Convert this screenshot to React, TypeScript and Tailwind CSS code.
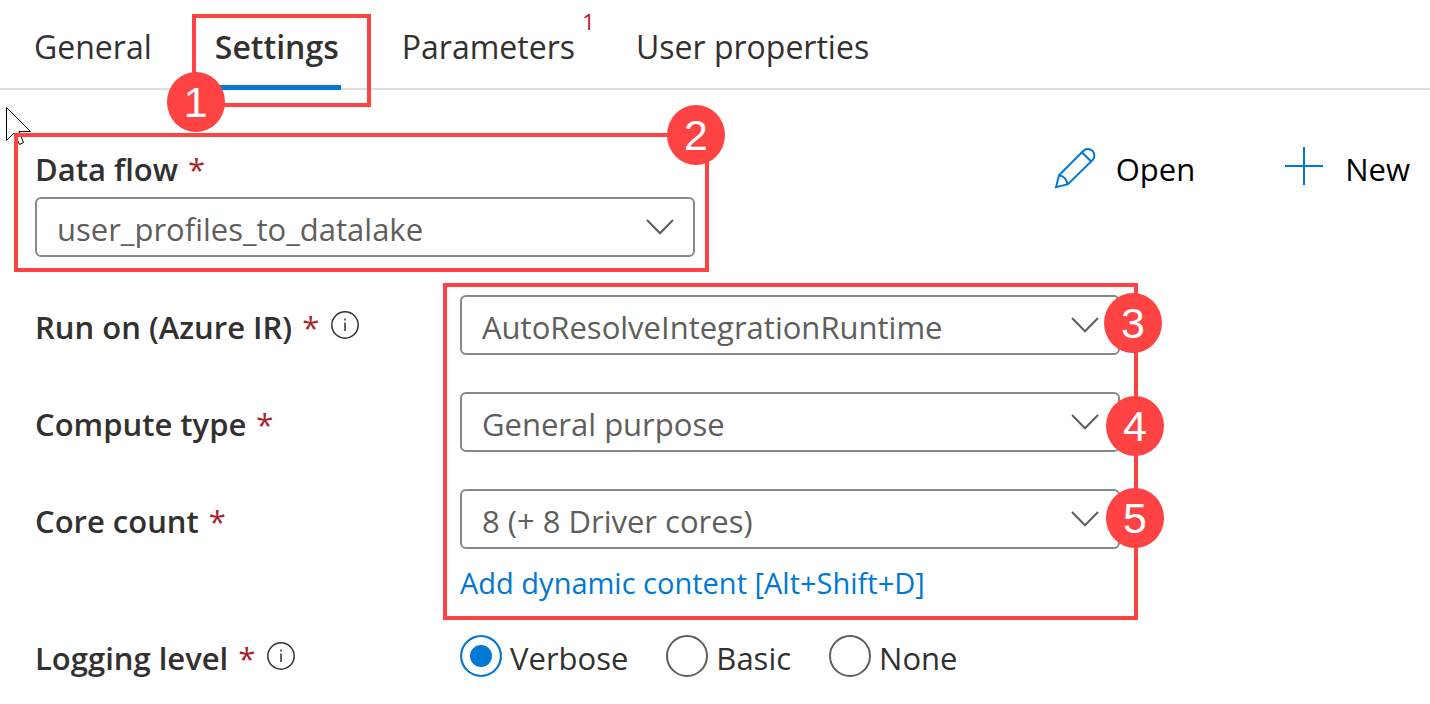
import { useState, type ReactNode } from "react";

function Badge({ n, className }: { n: number; className: string }) {
  return (
    <span
      className={`pointer-events-none absolute z-20 flex h-[60px] w-[58px] items-center justify-center rounded-[50%] bg-[#ff4343] font-['Liberation_Sans',sans-serif] text-[43px] leading-none font-normal text-white ${className}`}
    >
      {n}
    </span>
  );
}

function Outline({ className }: { className: string }) {
  return <span aria-hidden="true" className={`pointer-events-none absolute z-10 border-4 border-[#ff4343] ${className}`} />;
}

function InfoIcon() {
  return (
    <svg width="28" height="28" viewBox="0 0 28 28" fill="none" stroke="#323130" strokeWidth="1.5" aria-hidden="true">
      <circle cx="14" cy="14" r="13.2" />
      <path d="M14 11.5V20" />
      <path d="M14 7.5V9.5" />
    </svg>
  );
}

function PencilIcon() {
  return (
    <svg width="42" height="42" viewBox="0 0 42 42" fill="none" stroke="#0078d4" strokeWidth="2" aria-hidden="true">
      <path d="M2 40.2 5 28.2 29.2 4A6.4 6.4 0 0 1 38.6 13L14 37.2Z" />
      <path d="M28 5.5 37 14.2" />
      <path d="M5.2 28.5C9.5 28.5 13 32.5 13.2 37" />
    </svg>
  );
}

function PlusIcon() {
  return (
    <svg width="38" height="38" viewBox="0 0 38 38" stroke="#0078d4" strokeWidth="2" aria-hidden="true">
      <path d="M19 0V38M0 19H38" />
    </svg>
  );
}

function Pointer() {
  return (
    <svg className="pointer-events-none absolute top-[107px] left-[6px]" width="27" height="40" viewBox="0 0 27 40" fill="#fff" stroke="#000" strokeWidth="1" aria-hidden="true">
      <path d="M.5 .5V33.5L8 26 13.5 37.5 17.5 35.5 13 24.5H24.5Z" />
    </svg>
  );
}

function Star() {
  return <span className="font-normal text-[#a4262c]">*</span>;
}

function FieldLabel({ htmlFor, children, info }: { htmlFor: string; children: ReactNode; info?: boolean }) {
  return (
    <div className="flex h-[60px] items-center gap-3">
      <label htmlFor={htmlFor} className="flex gap-[10px] pt-1 font-semibold whitespace-nowrap">
        {children}
        <Star />
      </label>
      {info && <InfoIcon />}
    </div>
  );
}

function Dropdown({ id, value }: { id: string; value: string }) {
  return (
    <div className="relative">
      <select id={id} className="h-[60px] w-full appearance-none rounded-md border-2 border-[#8a8886] bg-white px-5 pt-1 text-[#605e5c]">
        <option>{value}</option>
      </select>
      <svg className="pointer-events-none absolute top-[22px] right-[21px]" width="28" height="16" viewBox="0 0 28 16" fill="none" stroke="#605e5c" strokeWidth="2" aria-hidden="true">
        <path d="M1 1 14 14.2 27 1" />
      </svg>
    </div>
  );
}

const tabClass = "flex h-full cursor-pointer items-center pt-[6px] whitespace-nowrap";
const levels = ["Verbose", "Basic", "None"];

export default function App() {
  const [level, setLevel] = useState("Verbose");
  return (
    <div className="relative min-h-screen bg-white font-['Open_Sans','Noto_Sans',sans-serif] text-[31px] leading-[44px] text-[#323130]">
      <nav role="tablist" className="flex h-[90px] gap-[61px] border-b-2 border-[#e1dfdd] pl-[34px] text-[32px]">
        <button role="tab" className={tabClass}>General</button>
        <div className="relative min-w-[128px]">
          <button role="tab" aria-selected="true" className={`${tabClass} w-full justify-center font-semibold`}>Settings</button>
          <span className="absolute top-[85px] right-0 left-0 h-[5px] bg-[#0078d4]" />
          <Outline className="top-[14px] -right-[30px] -left-[21px] h-[93px]" />
          <Badge n={1} className="top-[72px] -left-[46px]" />
        </div>
        <button role="tab" className={`${tabClass} relative`}>
          Parameters
          <span className="absolute top-[7px] -right-[20px] text-[22px] leading-[28px] font-medium text-[#c50f1f]">1</span>
        </button>
        <button role="tab" className={tabClass}>User properties</button>
      </nav>
      <Pointer />

      <main className="pt-[57px] pr-5 pl-[35px]">
        <div className="flex items-start justify-between gap-10">
          <div className="relative w-full max-w-[660px]">
            <label htmlFor="flow" className="mb-[6px] flex gap-[10px] font-semibold">
              Data flow
              <Star />
            </label>
            <Dropdown id="flow" value="user_profiles_to_datalake" />
            <Outline className="-top-[14px] -right-[14px] -bottom-[15px] -left-[21px]" />
            <Badge n={2} className="-top-[42px] -right-[30px]" />
          </div>
          <div className="flex shrink-0 gap-[90px] text-black">
            <button className="flex cursor-pointer items-start gap-5">
              <PencilIcon />
              Open
            </button>
            <button className="flex cursor-pointer items-start gap-[22px]">
              <PlusIcon />
              New
            </button>
          </div>
        </div>

        <div className="mt-[38px] flex">
          <div className="flex w-[425px] shrink-0 flex-col gap-[37px]">
            <FieldLabel htmlFor="runtime" info>Run on (Azure IR)</FieldLabel>
            <FieldLabel htmlFor="compute">Compute type</FieldLabel>
            <FieldLabel htmlFor="cores">Core count</FieldLabel>
          </div>
          <div className="relative flex w-full max-w-[660px] flex-col gap-[37px]">
            <Dropdown id="runtime" value="AutoResolveIntegrationRuntime" />
            <Dropdown id="compute" value="General purpose" />
            <div>
              <Dropdown id="cores" value="8 (+ 8 Driver cores)" />
              <a href="#dynamic" className="mt-[14px] block text-[29px] leading-[40px] text-[#0078d4]">Add dynamic content [Alt+Shift+D]</a>
            </div>
            <Outline className="-top-[12px] -right-[18px] -bottom-[17px] -left-[17px]" />
            <Badge n={3} className="-top-[2px] -right-[42px]" />
            <Badge n={4} className="top-[101px] -right-[44px]" />
            <Badge n={5} className="top-[193px] -right-[44px]" />
          </div>
        </div>

        <div className="mt-[23px] flex items-center">
          <div className="w-[425px] shrink-0">
            <FieldLabel htmlFor="level-Verbose" info>Logging level</FieldLabel>
          </div>
          <div role="radiogroup" aria-label="Logging level" className="flex gap-[38px]">
            {levels.map((name) => (
              <label key={name} className="flex items-center gap-2">
                <input
                  id={`level-${name}`}
                  type="radio"
                  name="level"
                  checked={level === name}
                  onChange={() => setLevel(name)}
                  className="size-[42px] appearance-none rounded-full border-2 border-[#605e5c] bg-white checked:border-[#0078d4] checked:bg-[#0078d4] checked:shadow-[inset_0_0_0_8px_white]"
                />
                <span className="pt-1">{name}</span>
              </label>
            ))}
          </div>
        </div>
      </main>
    </div>
  );
}
